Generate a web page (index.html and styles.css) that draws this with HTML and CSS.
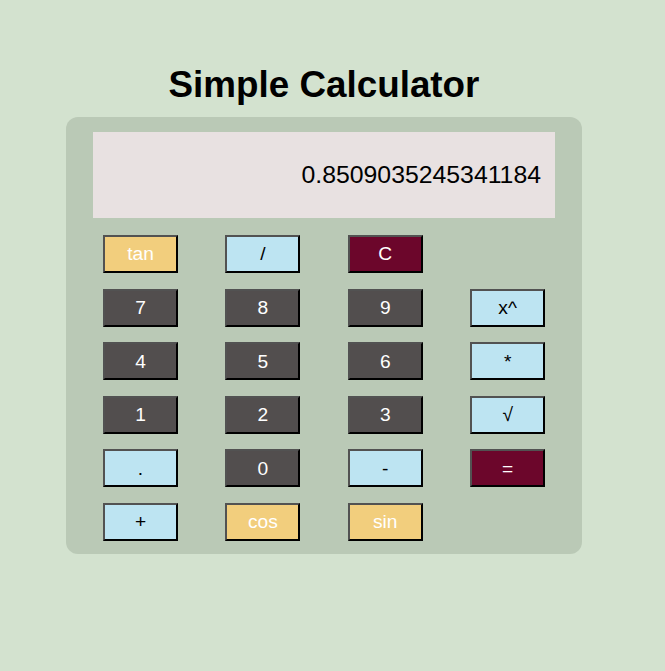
FILE: index.html
```html
<!DOCTYPE html>
<html lang="en">
<head>
<meta charset="utf-8">
<title>Simple Calculator</title>
<link rel="stylesheet" href="styles.css">
</head>
<body>
<main class="page">
  <h1 class="title">Simple Calculator</h1>
  <section class="calc">
    <div class="display">0.8509035245341184</div>
    <div class="keys">
      <button class="key fn">tan</button>
      <button class="key op">/</button>
      <button class="key clr">C</button>
      <span class="blank"></span>

      <button class="key num">7</button>
      <button class="key num">8</button>
      <button class="key num">9</button>
      <button class="key op">x^</button>

      <button class="key num">4</button>
      <button class="key num">5</button>
      <button class="key num">6</button>
      <button class="key op">*</button>

      <button class="key num">1</button>
      <button class="key num">2</button>
      <button class="key num">3</button>
      <button class="key op">√</button>

      <button class="key op">.</button>
      <button class="key num">0</button>
      <button class="key op">-</button>
      <button class="key clr">=</button>

      <button class="key op">+</button>
      <button class="key fn">cos</button>
      <button class="key fn">sin</button>
      <span class="blank"></span>
    </div>
  </section>
</main>
</body>
</html>
```
FILE: styles.css
```css
html, body {
  margin: 0;
  padding: 0;
}

body {
  background: #d3e2cf;
  font-family: "Liberation Sans", Arial, sans-serif;
  min-height: 671px;
}

.page {
  width: 648px;
  display: flex;
  flex-direction: column;
  align-items: center;
  padding-top: 64px;
}

.title {
  margin: 0 0 11px;
  font-size: 36.8px;
  font-weight: bold;
  color: #000;
  line-height: 42px;
}

.calc {
  width: 516px;
  box-sizing: border-box;
  background: #bac9b6;
  border-radius: 12px;
  padding: 15px 27px 13px;
}

.display {
  height: 86px;
  background: #e8e1e1;
  display: flex;
  align-items: center;
  justify-content: flex-end;
  padding-right: 14px;
  font-size: 24.8px;
  color: #000;
}

.keys {
  margin: 17px 10px 0;
  display: grid;
  grid-template-columns: repeat(4, 75px);
  grid-auto-rows: 38px;
  column-gap: 47.4px;
  row-gap: 15.6px;
}

.key {
  box-sizing: border-box;
  width: 75px;
  height: 38px;
  margin: 0;
  padding: 0;
  border-width: 2px;
  border-style: solid;
  border-color: #525252 #000 #000 #525252;
  font-family: "Liberation Sans", Arial, sans-serif;
  font-size: 19.2px;
  line-height: 1;
  cursor: pointer;
}

.fn {
  background: #f2ce7d;
  color: #fff;
}

.op {
  background: #bde4f2;
  color: #000;
}

.num {
  background: #524e4e;
  color: #fff;
}

.clr {
  background: #6c062b;
  color: #fff;
}
```
